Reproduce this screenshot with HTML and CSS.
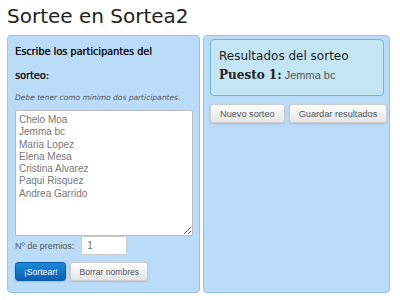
FILE: index.html
```html
<!DOCTYPE html>
<html lang="es">
<head>
  <meta charset="UTF-8" />
  <title>Sortea2</title>
  <link rel="stylesheet" href="styles.css">
</head>
<body>
  <h1 class="title">Sortee en Sortea2</h1>

  <div class="columns">
    <div class="panel">
      <h3 class="panel-title">Escribe los participantes del sorteo:</h3>
      <p class="hint">Debe tener como mínimo dos participantes.</p>
      <textarea class="names">Chelo Moa
Jemma bc
Maria Lopez
Elena Mesa
Cristina Alvarez
Paqui Risquez
Andrea Garrido</textarea>
      <div class="prizes">
        <label for="prizes">Nº de premios:</label>
        <input id="prizes" type="text" value="1" />
      </div>
      <div class="actions">
        <button class="btn btn-primary">¡Sortear!</button>
        <button class="btn">Borrar nombres</button>
      </div>
    </div>

    <div class="panel">
      <div class="results">
        <h3 class="results-title">Resultados del sorteo</h3>
        <p class="winner"><strong>Puesto 1:</strong> Jemma bc</p>
      </div>
      <div class="actions actions-results">
        <button class="btn">Nuevo sorteo</button>
        <button class="btn">Guardar resultados</button>
      </div>
    </div>
  </div>
</body>
</html>
```

FILE: styles.css
```css
:root {
  --panel-bg: #bbdcf9;
  --panel-border: #92c3ec;
  --text: #222;
}

body {
  margin: 0;
  padding: 0 8px 0 7px;
  font-family: "Liberation Sans", Arial, sans-serif;
  color: var(--text);
  background: #fff;
}

.title {
  margin: 0;
  height: 35px;
  font-family: "DejaVu Sans", Verdana, sans-serif;
  font-size: 20px;
  font-weight: normal;
  line-height: 32px;
  color: #222;
}

.columns {
  display: flex;
  gap: 3px;
  width: 383px;
}

.panel {
  box-sizing: border-box;
  height: 258px;
  background: var(--panel-bg);
  border: 1px solid var(--panel-border);
  border-radius: 4px;
  padding: 4px 7px 0 7px;
}

.panel:first-child {
  width: 193px;
}

.panel:last-child {
  width: 187px;
  padding: 3px 5px 0 6px;
}

.panel-title {
  max-width: 160px;
  margin: 0;
  font-family: "DejaVu Sans Condensed", "DejaVu Sans", sans-serif;
  font-size: 10.8px;
  font-weight: normal;
  line-height: 24px;
  color: #111;
  text-shadow: 0.3px 0 0 #111;
}

.hint {
  margin: 5px 0 8px;
  font-size: 7.5px;
  font-style: italic;
  color: #555;
  font-family: "DejaVu Sans", Verdana, sans-serif;
}

.names {
  display: block;
  box-sizing: border-box;
  width: 178px;
  height: 126px;
  margin: 0;
  padding: 3px 3px;
  border: 1px solid #bbb;
  border-radius: 2px;
  font-family: "Liberation Sans", Arial, sans-serif;
  font-size: 10px;
  line-height: 12.3px;
  color: #777;
  resize: vertical;
}

.prizes {
  display: flex;
  align-items: center;
  gap: 7px;
  margin-top: 0;
  font-size: 9px;
  color: #555;
}

.prizes input {
  box-sizing: border-box;
  width: 46px;
  height: 19px;
  border: 1px solid #ccc;
  border-radius: 2px;
  padding: 0 5px;
  font-family: "Liberation Sans", Arial, sans-serif;
  font-size: 10px;
  color: #777;
}

.actions {
  display: flex;
  gap: 4px;
  margin-top: 7px;
}

.btn {
  height: 19px;
  padding: 0 8px;
  border: 1px solid #ccc;
  border-radius: 3px;
  background: linear-gradient(#fdfdfd, #e6e6e6);
  box-shadow: 0 1px 2px rgba(0, 0, 0, 0.15);
  font-family: "Liberation Sans", Arial, sans-serif;
  font-size: 8.6px;
  color: #555;
  white-space: nowrap;
  cursor: pointer;
}

.btn-primary {
  border-color: #0d5ea8;
  background: linear-gradient(#1a8ad8, #0a5fb4);
  color: #fff;
  padding: 0 8px;
}

.actions-results {
  margin-top: 8px;
}

.actions-results .btn {
  font-size: 9.2px;
  padding: 0 9px;
}

.results {
  box-sizing: border-box;
  height: 57px;
  background: #c4e5f3;
  border: 1px solid #68b7df;
  border-radius: 4px;
  padding: 7px 8px 0;
}

.results-title {
  margin: 0;
  font-family: "DejaVu Sans", Verdana, sans-serif;
  font-size: 12px;
  font-weight: normal;
  line-height: 18px;
  color: #222;
}

.winner {
  margin: 3px 0 0;
  font-size: 11px;
  color: #555;
  font-family: "Liberation Sans", Arial, sans-serif;
}

.winner strong {
  font-family: "DejaVu Serif", Georgia, serif;
  font-size: 12px;
  color: #222;
}
```
